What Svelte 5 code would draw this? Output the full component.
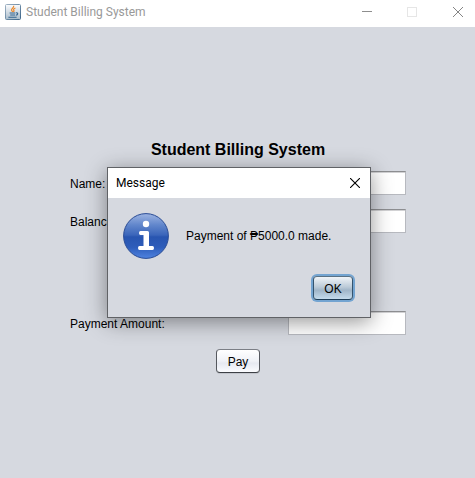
<script>
  let name = $state('');
  let balance = $state('');
  let amount = $state('');
  let open = $state(true);
</script>

<div class="window">
  <header class="titlebar">
    <svg class="logo" width="16" height="16" viewBox="0 0 16 16" aria-hidden="true">
      <defs>
        <linearGradient id="tile" x1="0" y1="0" x2="0" y2="1">
          <stop offset="0" stop-color="#fdfdfe" />
          <stop offset="1" stop-color="#a9bccb" />
        </linearGradient>
        <linearGradient id="edge" x1="0" y1="0" x2="1" y2="1">
          <stop offset="0" stop-color="#9fb2c3" />
          <stop offset="1" stop-color="#3d668a" />
        </linearGradient>
      </defs>
      <rect x="0.5" y="0.5" width="15" height="15" rx="1" fill="url(#tile)" stroke="url(#edge)" />
      <path d="M8.6 1.8C9.4 4 5.8 4.4 6.6 6.4L7.8 8M10.4 4C8.4 4.8 8.2 5.6 9 6.6L8.6 8" fill="none" stroke="#ee8a2c" stroke-width="1.2" />
      <path d="M4.6 9H10.4M5.2 11H10M3.4 13.2H11.6M11 8.8C13.4 8.6 13.2 11 10.8 11.2" fill="none" stroke="#35658f" stroke-width="1.1" />
    </svg>
    <span class="caption">Student Billing System</span>
    <div class="controls">
      <button aria-label="Minimize"><svg width="10" height="10" viewBox="0 0 10 10"><path d="M0 4.5H10" stroke="#8e8e8e" /></svg></button>
      <button aria-label="Maximize" disabled><svg width="10" height="10" viewBox="0 0 10 10"><rect x="0.5" y="0.5" width="9" height="9" fill="none" stroke="#e6e6e6" /></svg></button>
      <button aria-label="Close"><svg width="10" height="10" viewBox="0 0 10 10"><path d="M0 0L10 10M10 0L0 10" stroke="#858585" /></svg></button>
    </div>
  </header>

  <main>
    <h1>Student Billing System</h1>
    <form onsubmit={(e) => { e.preventDefault(); open = true; }}>
      <div class="row"><label for="name">Name:</label><input id="name" bind:value={name} /></div>
      <div class="row"><label for="balance">Balance:</label><input id="balance" bind:value={balance} /></div>
      <div class="row payment"><label for="amount">Payment Amount:</label><input id="amount" bind:value={amount} /></div>
      <button class="btn pay" type="submit">Pay</button>
    </form>
  </main>

  {#if open}
    <div class="dialog" role="dialog" aria-labelledby="dialog-title">
      <div class="dialog-bar">
        <span id="dialog-title">Message</span>
        <button aria-label="Close message" onclick={() => (open = false)}>
          <svg width="10" height="10" viewBox="0 0 10 10"><path d="M0 0L10 10M10 0L0 10" stroke="#000" stroke-width="1.1" /></svg>
        </button>
      </div>
      <div class="dialog-body">
        <div class="message">
          <svg width="46" height="46" viewBox="0 0 46 46" aria-hidden="true">
            <defs>
              <linearGradient id="ball" x1="0" y1="0" x2="0" y2="1">
                <stop offset="0" stop-color="#9db4e2" />
                <stop offset="0.25" stop-color="#6287cc" />
                <stop offset="0.48" stop-color="#3a65ba" />
                <stop offset="0.52" stop-color="#2855b0" />
                <stop offset="0.75" stop-color="#2e5dba" />
                <stop offset="1" stop-color="#4f83e0" />
              </linearGradient>
            </defs>
            <circle cx="23" cy="23" r="22.4" fill="url(#ball)" stroke="#2a4c95" stroke-width="1" />
            <circle cx="23" cy="11" r="3.2" fill="#fff" />
            <path d="M17.5 18H24.5Q26 18 26 19.5V33H29.5Q31 33 31 35T29.5 37H16.5Q15 37 15 35T16.5 33H20.5V22H17.5Q16 22 16 20T17.5 18Z" fill="#fff" />
          </svg>
          <p>Payment of ₱5000.0 made.</p>
        </div>
        <button class="btn ok" onclick={() => (open = false)}>OK</button>
      </div>
    </div>
  {/if}
</div>

<style>
  :global(body) {
    margin: 0;
    background: #d6d9e0;
  }

  .window {
    position: relative;
    display: flex;
    flex-direction: column;
    min-height: 100vh;
    background: #d6d9e0;
    color: #000;
    font: 12px/16px "Liberation Sans", Arial, sans-serif;
  }

  button {
    font: inherit;
    color: inherit;
    box-sizing: border-box;
  }

  svg {
    display: block;
  }

  .titlebar {
    display: flex;
    align-items: center;
    height: 27px;
    padding-left: 5px;
    padding-bottom: 4px;
    box-sizing: border-box;
    background: #fff;
    color: #999;
    font-family: "Segoe UI", Roboto, sans-serif;
  }

  .caption {
    flex: 1;
    margin-left: 5px;
    white-space: nowrap;
  }

  .controls {
    display: flex;
  }

  .controls button,
  .dialog-bar button {
    display: flex;
    align-items: center;
    justify-content: center;
    height: 22px;
    padding: 0;
    border: 0;
    background: none;
  }

  .controls button {
    width: 45px;
  }

  .controls button:last-child {
    width: 35px;
    margin-left: 6px;
  }

  main {
    display: flex;
    flex-direction: column;
    align-items: center;
    padding: 113px 16px 0 17px;
  }

  h1 {
    margin: 0 0 11px;
    font-size: 16px;
    line-height: 20px;
  }

  form {
    display: flex;
    flex-direction: column;
    gap: 14px;
    width: 100%;
    max-width: 336px;
  }

  .row {
    display: flex;
    align-items: center;
    justify-content: space-between;
    height: 24px;
  }

  label {
    padding-top: 2px;
  }

  .payment {
    margin-top: 64px;
  }

  input {
    box-sizing: border-box;
    width: 118px;
    height: 24px;
    padding: 0 6px;
    border: 1px solid #b7b9bf;
    border-top-color: #8d8e91;
    background: #fff;
    box-shadow: inset 0 1px 0 #d2d2d4;
    font: inherit;
  }

  .btn {
    padding: 2px 0 0;
    height: 24px;
    border: 1px solid #5d6066;
    border-radius: 4px;
  }

  .pay {
    align-self: center;
    width: 44px;
    border-color: #7b7e85 #55585e #3d4046;
    background: linear-gradient(#fff, #f0f2f7 50%, #e6e9f1 60%, #fbfcff);
    box-shadow: 0 1px 0 #c2c5cc;
  }

  .dialog {
    position: absolute;
    left: 107px;
    top: 167px;
    box-sizing: border-box;
    width: 264px;
    border: 1px solid #606266;
    background: #d6d9e0;
    box-shadow: 0 4px 20px rgba(0, 0, 0, 0.42);
  }

  .dialog-bar {
    display: flex;
    align-items: center;
    justify-content: space-between;
    height: 30px;
    padding-left: 8px;
    background: #fff;
    font-family: "Segoe UI", Roboto, sans-serif;
  }

  .dialog-bar button {
    width: 30px;
  }

  .dialog-body {
    display: flex;
    flex-direction: column;
    padding: 15px 17px 17px 15px;
  }

  .message {
    display: flex;
    align-items: center;
    gap: 17px;
    margin-bottom: 17px;
  }

  p {
    margin: 0;
    white-space: nowrap;
  }

  .ok {
    align-self: flex-end;
    width: 40px;
    border-color: #5a7184 #34536d #1d3c56;
    background: linear-gradient(#f0f4f8, #bccbd8 45%, #a0b5c8 60%, #c4dbec);
    box-shadow: 0 0 0 2px #73a4d1;
  }
</style>
